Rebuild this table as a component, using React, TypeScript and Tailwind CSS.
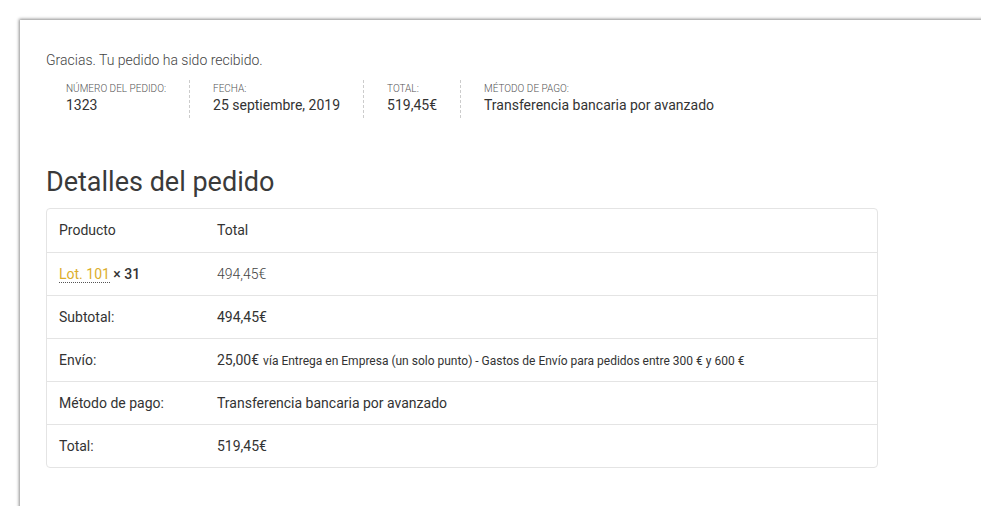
import React from "react";

export default function App() {
  return (
    <div
      className="w-[981px] h-[506px] overflow-hidden bg-white"
      style={{ fontFamily: "Roboto, 'Liberation Sans', sans-serif" }}
    >
      <div className="ml-[20px] mt-[20px] w-[1000px] h-[520px] bg-white shadow-[-1px_-1px_3px_rgba(0,0,0,0.45)] pl-[26px] pt-[30px]">
        <p className="text-[14px] leading-[20px] font-light text-[#444]">
          Gracias. Tu pedido ha sido recibido.
        </p>
        <ul className="flex ml-[20px] mt-[10px]">
          <Item label="Número del pedido:" value="1323" first />
          <Item label="Fecha:" value="25 septiembre, 2019" />
          <Item label="Total:" value="519,45€" />
          <Item label="Método de pago:" value="Transferencia bancaria por avanzado" last />
        </ul>
        <h2 className="mt-[48px] text-[27px] leading-[32px] text-[#3a3a3a]">Detalles del pedido</h2>
        <div className="mt-[10px] w-[832px] border border-[#e4e4e4] rounded-[4px] text-[14px] text-[#333]">
          <Row first label={<span className="text-[#333]">Producto</span>} value={<span className="text-[#333]">Total</span>} />
          <Row
            label={
              <span>
                <span className="text-[#dcae2c] border-b border-dotted border-[#555]">Lot. 101</span>{" "}
                <span className="font-medium text-[#333]">× 31</span>
              </span>
            }
            value={<span className="font-light text-[#444]">494,45€</span>}
          />
          <Row label="Subtotal:" value="494,45€" />
          <Row
            label="Envío:"
            value={
              <span>
                25,00€
                <span className="text-[12px] ml-[4px]">
                  vía Entrega en Empresa (un solo punto) - Gastos de Envío para pedidos entre 300 € y 600 €
                </span>
              </span>
            }
          />
          <Row label="Método de pago:" value="Transferencia bancaria por avanzado" />
          <Row label="Total:" value="519,45€" />
        </div>
      </div>
    </div>
  );
}

function Item({ label, value, first, last }: { label: string; value: string; first?: boolean; last?: boolean }) {
  return (
    <li
      className={
        "pt-[2px] pb-[3px] " +
        (first ? "pr-[23px] " : "px-[23px] ") +
        (last ? "" : "border-r border-dashed border-[#ccc]")
      }
    >
      <div className="text-[10px] leading-[13px] font-light uppercase text-[#555]">{label}</div>
      <div className="text-[14px] leading-[20px] text-[#333]">{value}</div>
    </li>
  );
}

function Row({ label, value, first }: { label: React.ReactNode; value: React.ReactNode; first?: boolean }) {
  return (
    <div className={"flex h-[43px] items-center " + (first ? "" : "border-t border-[#e4e4e4]")}>
      <div className="w-[158px] pl-[12px] shrink-0">{label}</div>
      <div className="pl-[12px]">{value}</div>
    </div>
  );
}
